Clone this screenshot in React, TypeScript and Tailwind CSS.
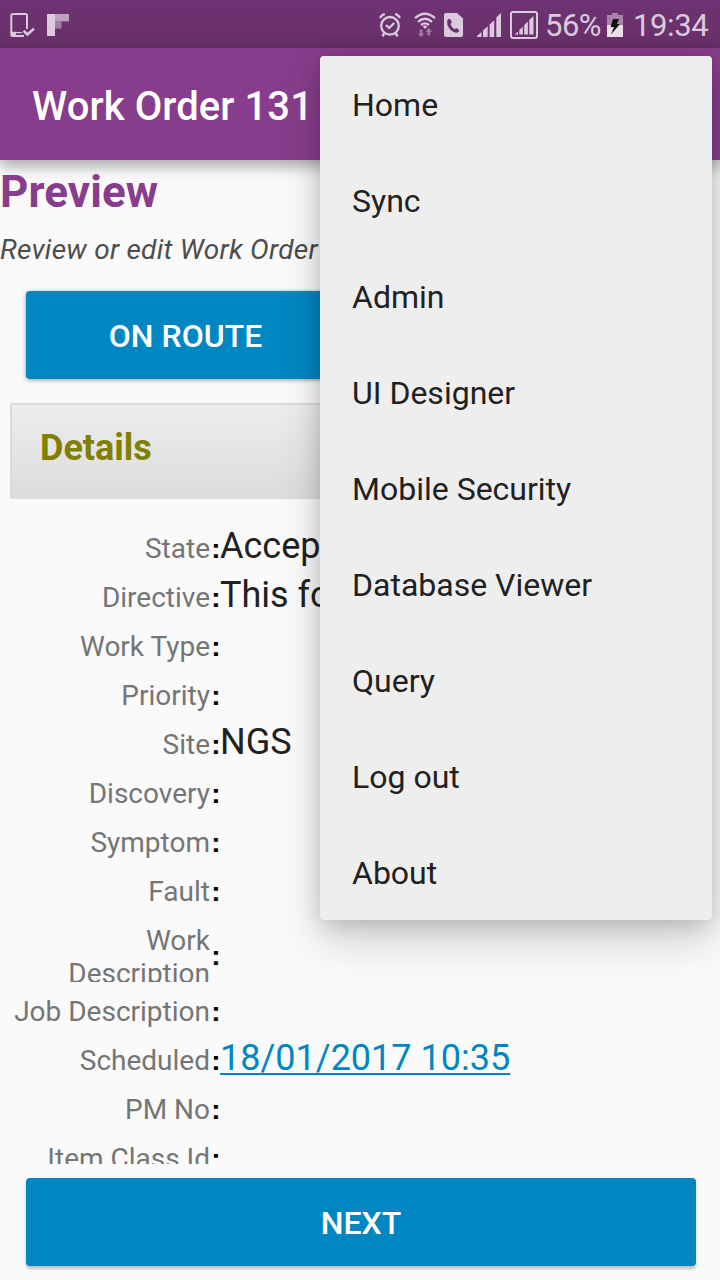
const menuItems = ['Home', 'Sync', 'Admin', 'UI Designer', 'Mobile Security', 'Database Viewer', 'Query', 'Log out', 'About'];

type Field = { label: string; value?: string; link?: boolean; tall?: boolean };

const fields: Field[] = [
  { label: 'State', value: 'Accepted' },
  { label: 'Directive', value: 'This for' },
  { label: 'Work Type' },
  { label: 'Priority' },
  { label: 'Site', value: 'NGS' },
  { label: 'Discovery' },
  { label: 'Symptom' },
  { label: 'Fault' },
  { label: 'Work Description', tall: true },
  { label: 'Job Description' },
  { label: 'Scheduled', value: '18/01/2017 10:35', link: true },
  { label: 'PM No' },
  { label: 'Item Class Id' },
];

function DeviceCheckIcon() {
  return (
    <svg className="h-[26px] w-[26px] shrink-0" viewBox="0 0 26 26" fill="none" stroke="currentColor" strokeWidth="2">
      <path d="M17 17V3.5Q17 2 15.5 2H3Q1.3 2 1.3 3.5V22.5Q1.3 24 3 24H14" />
      <path d="M1 21.8H6" strokeWidth="4" />
      <path d="M6 20.6H12" strokeWidth="1.2" />
      <path d="M13.5 18.8L17.4 22.5L24 16.6" strokeWidth="2.6" />
    </svg>
  );
}

function FlipboardIcon() {
  return (
    <svg className="h-[22px] w-[22px] shrink-0" viewBox="0 0 22 22" fill="currentColor">
      <path d="M0 0H8V22H0Z" />
      <path d="M8 0H22V7.4H8Z" opacity=".72" />
      <path d="M8 7.4H14.6V14.6H8Z" opacity=".5" />
    </svg>
  );
}

function AlarmIcon() {
  return (
    <svg className="h-[24px] w-[22px] shrink-0" viewBox="0 0 22 24" fill="none" stroke="currentColor" strokeWidth="2.3">
      <circle cx="11" cy="12.8" r="8.8" />
      <path d="M1 4.8Q2.8 1.8 5.8 .9M21 4.8Q19.2 1.8 16.2 .9" />
      <path d="M5.2 20.2L3.5 23.4M16.8 20.2L18.5 23.4" strokeWidth="2.5" />
      <path d="M6.8 12L10.2 15L15.2 10" />
    </svg>
  );
}

function WifiIcon() {
  return (
    <svg className="h-[26px] w-[22px] shrink-0" viewBox="0 0 22 26" fill="none" stroke="currentColor" strokeWidth="2.3">
      <path d="M1 6.2Q11-2.8 21 6.2M4 9.8Q11 3.7 18 9.8M7 13Q11 9.7 15 13" />
      <path d="M8.6 14.2Q11 12.6 13.4 14.2L11 17Z" fill="currentColor" stroke="none" />
      <g fill="currentColor" stroke="none" opacity=".5">
        <path d="M5.8 17.5H8.4V21.5H10.3L7.1 25L4 21.5H5.8Z" />
        <path d="M13.5 23.5H16.1V19.8H18L14.8 16L11.7 19.8H13.5Z" />
      </g>
    </svg>
  );
}

function PhoneCardIcon() {
  return (
    <svg className="h-[24px] w-[19px] shrink-0" viewBox="0 0 19 24">
      <path d="M2 0H13L19 5.5V22Q19 24 17 24H2Q0 24 0 22V2Q0 0 2 0Z" fill="currentColor" />
      <path d="M4.2 6.2Q5.3 5 6.5 6.5L7.8 9Q7.8 10.2 6.5 11Q7.3 14.6 10.6 16.3Q11.9 14.8 13 15.3L15.3 17.2Q15 19.2 13 19.7Q8.5 19.6 5.2 15.2Q2.7 11.5 3.1 8Q3.4 6.7 4.2 6.2Z" fill="#6b3170" />
    </svg>
  );
}

function SignalIcon() {
  return (
    <svg className="h-[24px] w-[24px] shrink-0" viewBox="0 0 24 24" fill="currentColor">
      <path d="M0 24V23L4.5 19V24ZM6 24V17.5L10.7 13.3V24ZM12.6 24V11.5L17.2 7.3V24ZM19.3 24V4.5L24 0V24Z" />
    </svg>
  );
}

function BoxedSignalIcon() {
  return (
    <svg className="h-[28px] w-[28px] shrink-0" viewBox="0 0 28 28" fill="currentColor">
      <rect x="1" y="1" width="26" height="26" rx="2" fill="none" stroke="currentColor" strokeWidth="2" />
      <path d="M5 23.5V23L8 20.7V23.5ZM9.3 23.5V19L12.8 15.8V23.5ZM14.2 23.5V14L17.9 10.5V23.5ZM19.3 23.5V9L23.5 5V23.5Z" />
    </svg>
  );
}

function BatteryIcon() {
  return (
    <svg className="h-[24px] w-[16px] shrink-0" viewBox="0 0 16 24">
      <path d="M5 0H11V2H16V12H0V2H5Z" fill="#a783a9" />
      <path d="M0 12H16V24H0Z" fill="#eadfeb" />
      <path d="M6 6H12L9.7 11H13L4 21.5L7 14H3.5Z" fill="#111" />
    </svg>
  );
}

function StatusBar() {
  return (
    <div className="flex h-12 items-center bg-gradient-to-b from-[#6e3373] to-[#683069] pl-[10px] pr-[12px] pt-[2px] text-[#dbcadc]">
      <DeviceCheckIcon />
      <div className="ml-[11px]"><FlipboardIcon /></div>
      <div className="flex-1" />
      <div className="mr-[13px]"><AlarmIcon /></div>
      <div className="mr-[8px]"><WifiIcon /></div>
      <div className="mr-[14px]"><PhoneCardIcon /></div>
      <div className="mr-[9px]"><SignalIcon /></div>
      <div className="mr-[7px]"><BoxedSignalIcon /></div>
      <span className="w-[62px] whitespace-nowrap pt-[2px] text-[31px] leading-9 tracking-[-0.5px]">56%</span>
      <BatteryIcon />
      <span className="ml-[10px] w-[75px] whitespace-nowrap pt-[2px] text-[31px] leading-9 tracking-[-0.4px]">19:34</span>
    </div>
  );
}

function FieldRow({ field }: { field: Field }) {
  if (field.tall) {
    return (
      <div className="flex h-[71px] pt-[9px]">
        <div className="h-[58px] w-[210px] shrink-0 overflow-hidden pl-10 text-right text-[28px] leading-[33px] text-[#757575]">{field.label}</div>
        <span className="ml-px mt-[15px] w-[10px] text-center font-['Liberation_Sans',sans-serif] text-[28px] font-bold leading-[33px] text-black">:</span>
      </div>
    );
  }
  return (
    <div className="flex h-[49px] items-baseline whitespace-nowrap">
      <span className="w-[210px] shrink-0 text-right text-[28px] leading-[51px] text-[#757575]">{field.label}</span>
      <span className="-mr-px ml-px w-[10px] shrink-0 text-center font-['Liberation_Sans',sans-serif] text-[28px] font-bold leading-[33px] text-black">:</span>
      {field.value && (
        <span className={field.link ? 'text-[36px] leading-[42px] text-[#0087c2] underline decoration-2 underline-offset-[3px] [text-decoration-skip-ink:none]' : 'text-[36px] leading-[42px] text-[#212121]'}>{field.value}</span>
      )}
    </div>
  );
}

export default function App() {
  return (
    <div className="relative flex h-[1280px] w-[720px] flex-col overflow-hidden bg-[#fafafa] font-[Roboto,sans-serif]">
      <StatusBar />
      <header className="flex h-28 shrink-0 items-center bg-[#873d8b] pl-8 pt-[6px] shadow-[0_6px_14px_rgba(0,0,0,0.34)]">
        <h1 className="text-[40px] font-medium leading-[48px] tracking-[0.08px] text-white">Work Order 131</h1>
      </header>
      <main className="flex h-[1004px] shrink-0 flex-col overflow-hidden">
        <h2 className="mt-[6px] h-[52px] text-[44px] font-bold leading-[52px] tracking-[0.1px] text-[#873d8b]">Preview</h2>
        <p className="mt-[15px] h-[34px] whitespace-nowrap text-[28px] italic leading-[34px] tracking-[0.25px] text-[#4d4d4d]">Review or edit Work Order</p>
        <button className="ml-[26px] mt-[24px] flex h-[88px] w-[319px] shrink-0 items-center justify-center rounded-[4px] bg-[#0087c2] pt-px text-[32px] font-medium text-white shadow-[0_1px_4px_rgba(0,0,0,0.4)]">ON ROUTE</button>
        <section className="mx-[10px] mt-6 flex h-24 shrink-0 items-center rounded-[2px] border-l-2 border-t-2 border-[#dbdbdb] bg-gradient-to-b from-[#ededed] to-[#dcdcdc] pl-7">
          <h3 className="mb-[9px] text-[36px] font-bold leading-[42px] text-[#808000]">Details</h3>
        </section>
        <div className="mt-[24px]">
          {fields.map((field) => <FieldRow key={field.label} field={field} />)}
        </div>
      </main>
      <footer className="px-6 pt-[14px]">
        <button className="ml-[2px] flex h-[88px] w-[670px] items-center justify-center rounded-[4px] bg-[#0087c2] pt-px text-[32px] font-medium text-white shadow-[0_3px_3px_rgba(0,0,0,0.22)]">NEXT</button>
      </footer>
      <nav className="absolute left-[320px] top-14 w-[392px] rounded-[4px] bg-[#eeeeee] shadow-[0_20px_44px_rgba(0,0,0,0.18),0_4px_20px_rgba(0,0,0,0.15)]">
        {menuItems.map((item) => (
          <div key={item} className="flex h-24 items-center px-8 pt-[2px] text-[32px] leading-[38px] text-[#212121]">{item}</div>
        ))}
      </nav>
    </div>
  );
}
